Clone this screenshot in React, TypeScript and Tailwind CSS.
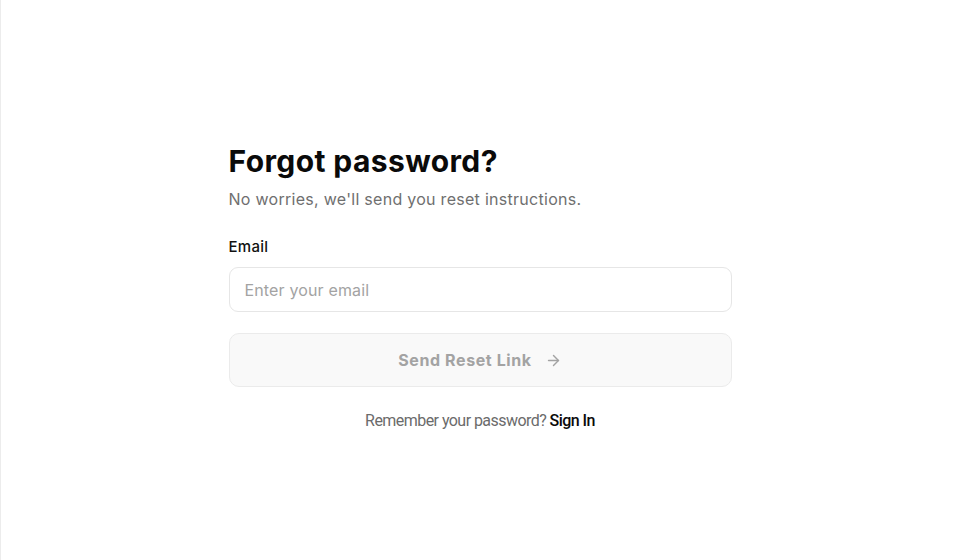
import { ArrowRight } from 'lucide-react'

export default function App() {
  return (
    <div className="min-h-screen bg-white border-l border-[#ececec] flex items-center justify-center font-['Inter','Noto_Sans',sans-serif]">
      <div className="w-[503px] mt-[16px]">
        {/* Heading */}
        <h1 className="text-[30px] font-bold leading-[36px] text-[#0a0a0a] tracking-[0.4px]">Forgot password?</h1>
        <p className="mt-[8px] text-[16px] leading-[24px] text-[#6f6f6f] tracking-[0.28px]">
          No worries, we&apos;ll send you reset instructions.
        </p>

        {/* Form */}
        <form className="mt-[26px]" onSubmit={(e) => e.preventDefault()}>
          <label htmlFor="email" className="block text-[15px] font-medium leading-[20px] text-[#111] tracking-[0.3px]">
            Email
          </label>
          <input
            id="email"
            type="email"
            placeholder="Enter your email"
            className="mt-[10px] w-full h-[45px] rounded-[9px] border border-[#e6e6e6] bg-white px-[15px] text-[16px] text-[#111] placeholder:text-[#a3a3a3] outline-none tracking-[0.15px]"
          />
          <button
            type="submit"
            disabled
            className="mt-[21px] w-full h-[54px] rounded-[10px] border border-[#ebebeb] bg-[#f9f9f9] flex items-center justify-center gap-[13px] text-[16px] font-bold text-[#a3a3a3] tracking-[0.6px]"
          >
            Send Reset Link
            <ArrowRight size={17} strokeWidth={2} />
          </button>
        </form>

        <p className="mt-[22px] text-center text-[16px] text-[#6b6b6b] tracking-[-0.55px] font-['Roboto',sans-serif]">
          Remember your password?{' '}
          <a href="#" className="font-medium text-[#0a0a0a]">Sign In</a>
        </p>
      </div>
    </div>
  )
}
